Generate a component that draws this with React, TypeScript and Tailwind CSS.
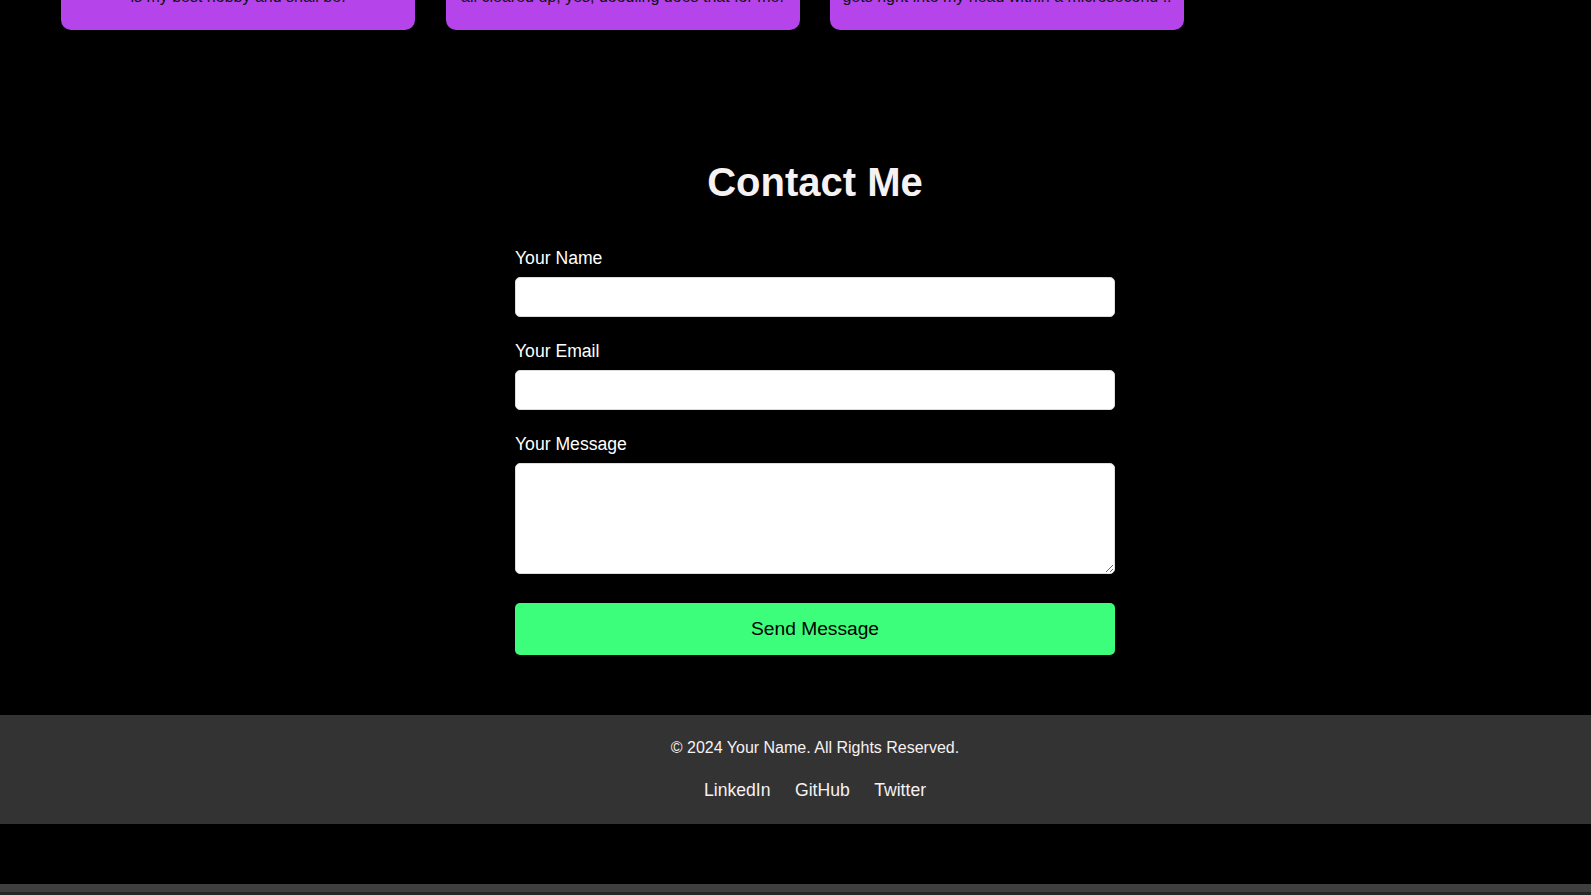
import { useState } from 'react';

// Last lines of the hobby cards that sit above the contact section
const cards = [
  'is my best hobby and shall be.',
  'all cleared up, yes, doodling does that for me.',
  'gets right into my head within a microsecond ..',
];

const socials = ['LinkedIn', 'GitHub', 'Twitter'];

export default function App() {
  const [name, setName] = useState('');
  const [email, setEmail] = useState('');
  const [message, setMessage] = useState('');

  return (
    <div className="h-[895px] overflow-hidden bg-black flex flex-col font-['Liberation_Sans',Arial,sans-serif]">
      {/* Cards (scrolled mostly out of view) */}
      <section className="-mt-[12px] pl-[61px] flex gap-[30.5px]">
        {cards.map((text) => (
          <div key={text} className="w-[354px] px-[12px] pb-[24px] bg-[#b545eb] rounded-[10px] text-center">
            <p className="text-[16px] leading-[18px] text-[#111]">{text}</p>
          </div>
        ))}
      </section>

      {/* Contact */}
      <section className="pl-[39px] pt-[129px] pb-[60px] flex flex-col items-center">
        <h2 className="text-[40px] leading-[46px] font-bold text-[#f6f1f2]">Contact Me</h2>

        <form className="mt-[43px] w-[600px] flex flex-col" onSubmit={(e) => e.preventDefault()}>
          <div className="mb-[24px]">
            <label htmlFor="name" className="block mb-[9px] text-[17.6px] leading-[20px] text-white">
              Your Name
            </label>
            <input
              id="name"
              value={name}
              onChange={(e) => setName(e.target.value)}
              className="block w-full h-[40px] px-[10px] bg-white border border-[#ddd] rounded-[5px] text-[16px] text-black outline-none"
            />
          </div>

          <div className="mb-[24px]">
            <label htmlFor="email" className="block mb-[9px] text-[17.6px] leading-[20px] text-white">
              Your Email
            </label>
            <input
              id="email"
              type="email"
              value={email}
              onChange={(e) => setEmail(e.target.value)}
              className="block w-full h-[40px] px-[10px] bg-white border border-[#ddd] rounded-[5px] text-[16px] text-black outline-none"
            />
          </div>

          <div className="mb-[29px]">
            <label htmlFor="message" className="block mb-[9px] text-[17.6px] leading-[20px] text-white">
              Your Message
            </label>
            <textarea
              id="message"
              value={message}
              onChange={(e) => setMessage(e.target.value)}
              className="block w-full h-[111px] p-[10px] bg-white border border-[#ddd] rounded-[5px] text-[16px] text-black outline-none"
            />
          </div>

          <button
            type="submit"
            className="w-full h-[52px] bg-[#3dfe7a] rounded-[5px] text-[19.2px] text-black cursor-pointer"
          >
            Send Message
          </button>
        </form>
      </section>

      {/* Footer */}
      <footer className="bg-[#333] pl-[39px] pt-[24px] pb-[24px] flex flex-col items-center text-[#f6f1f2]">
        <p className="text-[16px] leading-[18px]">© 2024 Your Name. All Rights Reserved.</p>
        <div className="mt-[23px] flex gap-[24.5px] text-[17.6px] leading-[20px]">
          {socials.map((s) => (
            <a key={s} href="#" className="text-[#f6f1f2]">
              {s}
            </a>
          ))}
        </div>
      </footer>

      <div className="flex-1" />

      {/* horizontal scrollbar strip */}
      <div className="h-[8px] bg-[#3f3f3f]" />
      <div className="h-[3px] bg-[#262626]" />
    </div>
  );
}
